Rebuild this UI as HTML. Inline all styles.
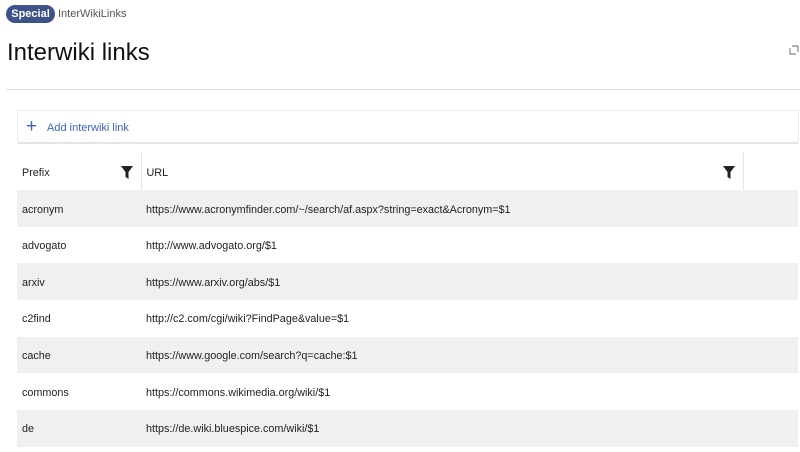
<!DOCTYPE html>
<html><head><style>
body{margin:0;width:800px;height:452px;overflow:hidden;background:#fff;font-family:"Liberation Sans",sans-serif;color:#222;}
.pill{position:absolute;left:6px;top:5px;width:49px;height:18px;border-radius:9px;background:#3e5389;color:#fff;font-size:11px;font-weight:bold;line-height:18px;text-align:center;}
.crumb{position:absolute;left:58px;top:5px;line-height:18px;font-size:11px;color:#555;}
h1{position:absolute;left:7px;top:39px;margin:0;font-weight:normal;font-size:24px;color:#111;}
.hr{position:absolute;left:6px;top:89px;width:794px;height:1px;background:#ddd;}
.tb{position:absolute;left:17px;top:110px;width:780px;height:31px;border:1px solid #eee;border-bottom:2px solid #e4e4e4;}
.tb span{position:absolute;left:29px;top:11px;font-size:11px;color:#3a64c8;}
.tb b{font-weight:normal;font-size:19px;position:absolute;left:8px;top:6px;color:#3a64c8;line-height:19px}
table{position:absolute;left:17px;top:152px;width:781px;border-collapse:collapse;font-size:10.8px;}
td,th{padding:0 0 0 5px;text-align:left;font-weight:normal;}
th{height:38px;border-bottom:1px solid #eee;padding-top:4px;box-sizing:border-box}
th.b{border-right:1px solid #e4e4e4;position:relative}
td{height:36.7px;padding-top:2px;box-sizing:border-box}
tr:nth-child(even) td{background:#f0f0f0;}
.f{position:absolute;right:8px;top:14px;}
</style></head><body>
<div class="pill">Special</div><div class="crumb">InterWikiLinks</div>
<h1>Interwiki links</h1>
<svg style="position:absolute;left:789px;top:45px" width="10" height="10"><path d="M1 3v6h6M3 1h6v6" fill="none" stroke="#888" stroke-width="1.2"/></svg>
<div class="hr"></div>
<div class="tb"><b>+</b><span>Add interwiki link</span></div>
<table>
<tr><th class="b" style="width:124px">Prefix<svg class="f" width="12" height="13"><path d="M0 0h12L7.5 6v7L4.5 11V6z" fill="#222"/></svg></th><th class="b" style="width:602px">URL<svg class="f" width="12" height="13"><path d="M0 0h12L7.5 6v7L4.5 11V6z" fill="#222"/></svg></th><th></th></tr>
<tr><td>acronym</td><td colspan="2">https://www.acronymfinder.com/~/search/af.aspx?string=exact&amp;Acronym=$1</td></tr>
<tr><td>advogato</td><td colspan="2">http://www.advogato.org/$1</td></tr>
<tr><td>arxiv</td><td colspan="2">https://www.arxiv.org/abs/$1</td></tr>
<tr><td>c2find</td><td colspan="2">http://c2.com/cgi/wiki?FindPage&amp;value=$1</td></tr>
<tr><td>cache</td><td colspan="2">https://www.google.com/search?q=cache:$1</td></tr>
<tr><td>commons</td><td colspan="2">https://commons.wikimedia.org/wiki/$1</td></tr>
<tr><td>de</td><td colspan="2">https://de.wiki.bluespice.com/wiki/$1</td></tr>
</table>
</body></html>
